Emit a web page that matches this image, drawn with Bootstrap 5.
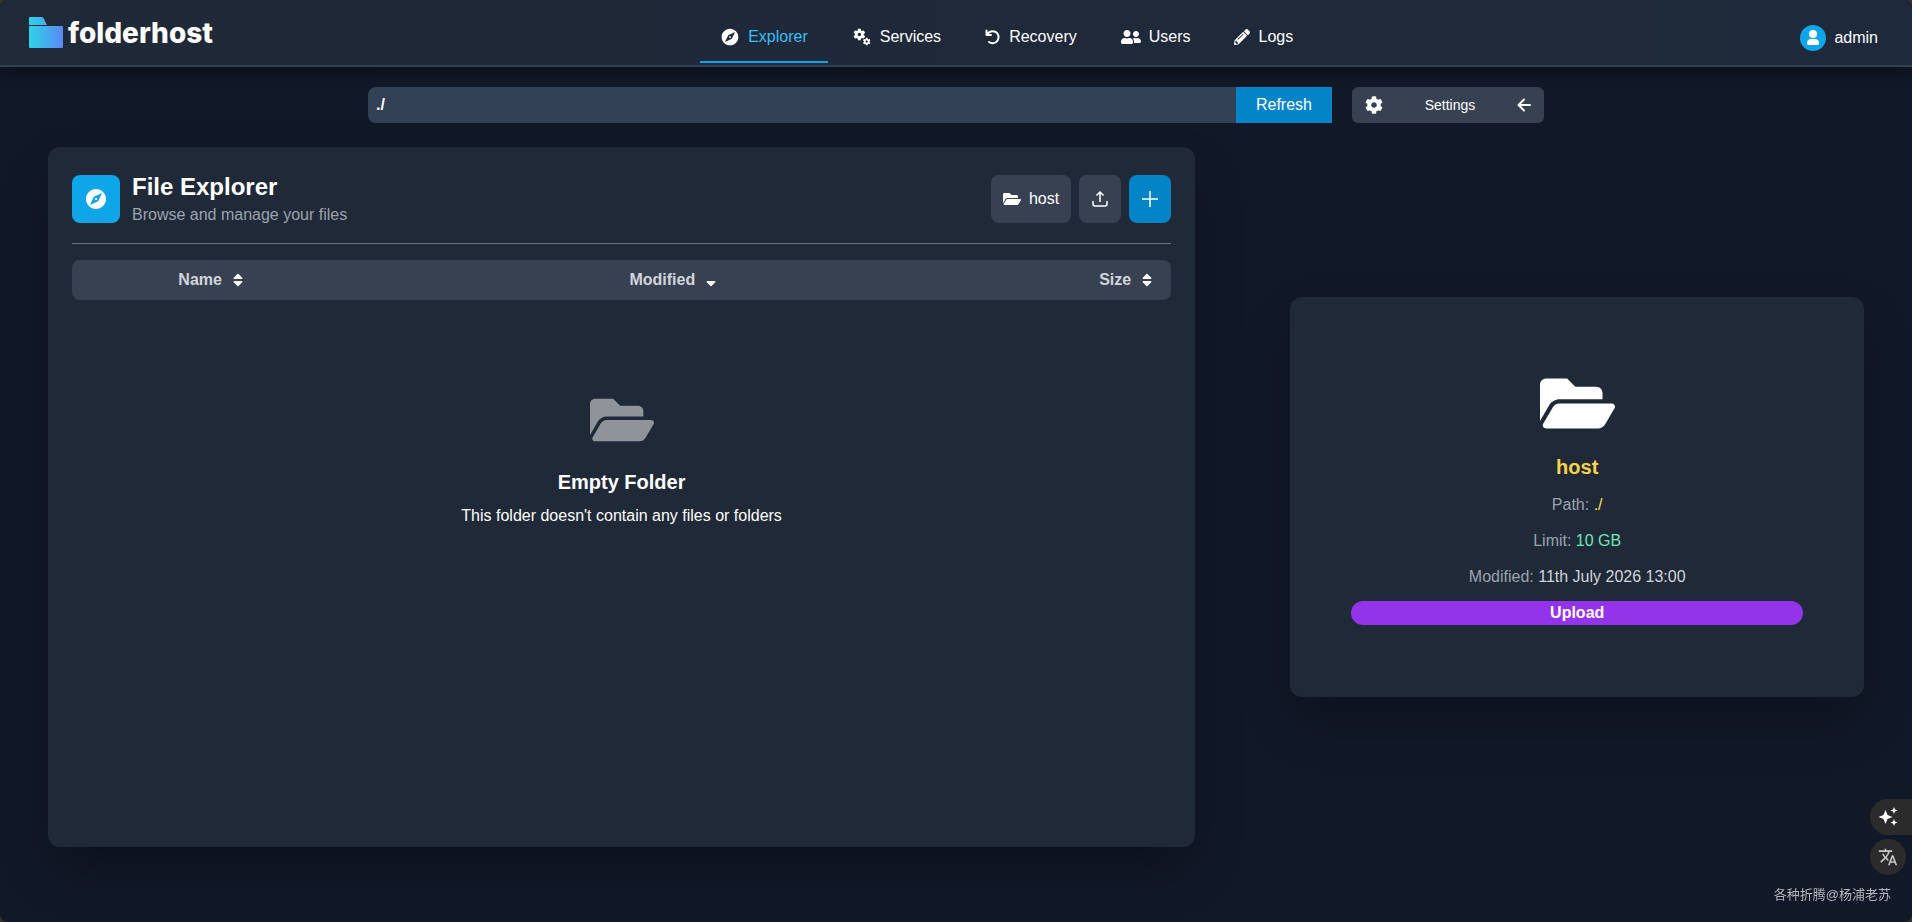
<!DOCTYPE html>
<html lang="en">
<head>
<meta charset="utf-8">
<meta name="viewport" content="width=device-width, initial-scale=1">
<title>folderhost – Explorer</title>
<link href="https://cdn.jsdelivr.net/npm/bootstrap@5.3.0/dist/css/bootstrap.min.css" rel="stylesheet">
<style>
  html { background: #35322f; }
  body {
    background: #111827; color: #fff; min-height: 100vh; border-radius: 8px; overflow-x: hidden;
    font-family: "Liberation Sans", Arial, sans-serif; font-size: 16px; line-height: 24px;
  }
  svg { display: block; flex: none; fill: currentColor; }
  .topbar {
    background: linear-gradient(90deg, #1f2937, #1e293b); border-bottom: 2px solid #334155;
    border-radius: 8px 8px 0 0; padding: 13px 34px 2px 28px; box-shadow: 0 10px 15px -3px rgba(0,0,0,.3);
  }
  .brand { color: #fff; gap: 5px; font: 800 28px/32px Inter, sans-serif; }
  .main-nav .nav-link { color: #fff; padding: 12px 20px; border-bottom: 2px solid transparent; gap: 8px; }
  .main-nav .nav-link.active { color: #38bdf8; border-color: #0ea5e9; }
  .main-nav .nav-link svg { color: #fff; }
  .account { color: #fff; gap: 8px; }
  .avatar { width: 26px; height: 26px; background: #0ea5e9; }
  .pathbar { max-width: 1176px; gap: 20px; margin-top: 20px; }
  .path-input, .path-input:focus {
    background: #334155; color: #fff; border: 0; border-radius: 8px 0 0 8px; height: 36px;
    padding: 0 8px; font-weight: 700; box-shadow: none;
  }
  .blue, .blue:hover { background: #0284c7; color: #fff; }
  .gray, .gray:hover { background: #374151; color: #fff; }
  .refresh { border: 0; border-radius: 0; padding: 0 20px; }
  .settings { width: 192px; height: 36px; padding: 0 13px; border: 0; border-radius: 6px; font-size: 14px; }
  .workspace { padding: 24px 48px; }
  .panel { background: #1f2937; border-radius: 12px; box-shadow: 0 25px 50px -12px rgba(0,0,0,.35); }
  .files { width: 60vw; min-height: 700px; padding: 24px; }
  .files-head { padding-bottom: 16px; border-bottom: 1px solid #6b7280; margin-bottom: 16px; }
  .tile { width: 48px; height: 48px; background: #0ea5e9; border-radius: 8px; }
  .title { font-size: 24px; line-height: 32px; font-weight: 700; }
  .muted { color: #9ca3af; }
  .tool { height: 48px; padding: 0 12px; border: 0; border-radius: 8px; gap: 8px; }
  .listing { width: 100%; table-layout: fixed; border-collapse: separate; border-spacing: 0; background: #374151; border-radius: 8px; }
  .listing th { padding: 8px 16px; text-align: center; }
  .listing th:last-child { text-align: right; }
  .sort { background: none; border: 0; padding: 0; gap: 8px; color: #d1d5db; font-weight: 700; }
  .sort svg { color: #fff; }
  .empty { padding: 88px 0; }
  .faded { opacity: .5; }
  .subtitle { font-size: 20px; line-height: 28px; font-weight: 700; }
  .details { width: 30vw; min-height: 400px; padding: 24px 61px 27px; gap: 12px; }
  .gold { color: #fcd34d; }
  .path-value { color: #fde047; }
  .limit-value { color: #6ee7b7; }
  .date-value { color: #d1d5db; }
  .upload { background: #9333ea; color: #fff; border: 0; border-radius: 12px; font-weight: 700; line-height: 24px; padding: 0; }
  .floating { right: 0; bottom: 47px; gap: 4px; }
  .floating button { background: #2b2b2b; color: #fff; border: 0; height: 36px; padding: 0 8px; }
  .assist { width: 42px; border-radius: 18px 0 0 18px; }
  .translate { width: 36px; border-radius: 18px; margin-right: 6px; }
  .translate svg { opacity: .75; }
  .credit { right: 21px; bottom: 15px; color: #b4b6ba; font: 13px/24px "Liberation Sans", "Noto Sans CJK SC", sans-serif; }
</style>
</head>
<body>
<svg width="0" height="0" class="position-absolute" aria-hidden="true">
  <symbol id="compass" viewBox="0 0 24 24"><path d="M12 10.9c-.61 0-1.1.49-1.1 1.1s.49 1.1 1.1 1.1c.61 0 1.1-.49 1.1-1.1s-.49-1.1-1.1-1.1zM12 2C6.48 2 2 6.48 2 12s4.48 10 10 10 10-4.48 10-10S17.52 2 12 2zm2.19 12.19L6 18l3.81-8.19L18 6l-3.81 8.19z"/></symbol>
  <symbol id="folder-open" viewBox="0 0 576 512"><path d="M572.694 292.093L500.27 416.248A63.997 63.997 0 0 1 444.989 448H45.025c-18.523 0-30.064-20.093-20.731-36.093l72.424-124.155A64 64 0 0 1 152 256h399.964c18.523 0 30.064 20.093 20.73 36.093zM152 224h328v-48c0-26.51-21.49-48-48-48H272l-64-64H48C21.49 64 0 85.49 0 112v278.046l69.077-118.418C86.214 242.25 117.989 224 152 224z"/></symbol>
  <symbol id="sort" viewBox="0 0 320 512"><path d="M41 288h238c21.4 0 32.1 25.9 17 41L177 448c-9.400 9.400-24.600 9.400-33.900 0L24 329c-15.100-15.100-4.400-41 17-41zm255-105L177 64c-9.400-9.400-24.600-9.400-33.900 0L24 183c-15.100 15.100-4.400 41 17 41h238c21.400 0 32.100-25.900 17-41z"/></symbol>
  <symbol id="sort-down" viewBox="0 0 320 512"><path d="M41 288h238c21.400 0 32.100 25.900 17 41L177 448c-9.400 9.400-24.600 9.400-33.900 0L24 329c-15.100-15.100-4.400-41 17-41z"/></symbol>
</svg>

<header class="topbar d-flex align-items-center justify-content-between">
  <a href="#" class="brand d-flex align-items-center align-self-start mt-1 text-decoration-none">
    <svg width="35" height="32" viewBox="0 0 35 32">
      <defs><linearGradient id="lg" gradientUnits="userSpaceOnUse" x1="1" y1="0" x2="35" y2="0"><stop offset="0" stop-color="#2dd4e6"/><stop offset="1" stop-color="#5b87f5"/></linearGradient></defs>
      <path fill="url(#lg)" d="M2 0h12q1 0 2 2l3 6H1V1q0-1 1-1zM1 9h33q1 0 1 1v20q0 1-1 1H2q-1 0-1-1z"/>
    </svg>
    <span>folderhost</span>
  </a>
  <nav class="main-nav nav gap-1" aria-label="Main">
    <a class="nav-link active d-flex align-items-center" href="#"><svg width="20" height="20"><use href="#compass"/></svg>Explorer</a>
    <a class="nav-link d-flex align-items-center" href="#"><svg width="20" height="20" viewBox="0 0 24 24"><path d="M14.170,13.710l1.400-2.420c0.090-0.150,0.050-0.340-0.080-0.450l-1.480-1.160c0.030-0.220,0.050-0.450,0.050-0.680s-0.020-0.460-0.050-0.690l1.480-1.160c0.130-0.110,0.170-0.300,0.080-0.450l-1.400-2.420c-0.090-0.150-0.270-0.210-0.430-0.150L12,4.830c-0.360-0.280-0.750-0.510-1.180-0.690l-0.260-1.850C10.530,2.130,10.380,2,10.210,2h-2.800C7.240,2,7.090,2.130,7.060,2.300L6.800,4.150C6.380,4.330,5.980,4.560,5.620,4.840l-1.740-0.700c-0.160-0.060-0.340,0-0.430,0.150l-1.400,2.420C1.960,6.860,2,7.050,2.130,7.160l1.480,1.160C3.580,8.540,3.560,8.770,3.560,9s0.020,0.460,0.050,0.690l-1.480,1.160C2,10.960,1.960,11.150,2.050,11.300l1.400,2.420c0.090,0.150,0.270,0.210,0.430,0.150l1.740-0.700c0.360,0.280,0.750,0.510,1.180,0.690l0.260,1.850C7.090,15.870,7.240,16,7.410,16h2.800c0.170,0,0.320-0.130,0.350-0.300l0.260-1.850c0.420-0.180,0.820-0.410,1.180-0.690l1.740,0.700C13.900,13.920,14.080,13.860,14.170,13.710zM8.810,11c-1.100,0-2-0.900-2-2c0-1.100,0.900-2,2-2s2,0.900,2,2C10.810,10.100,9.910,11,8.810,11zM21.920,18.670l-0.960-0.740c0.020-0.140,0.040-0.290,0.040-0.440c0-0.150-0.010-0.300-0.040-0.440l0.950-0.740c0.080-0.070,0.110-0.190,0.050-0.290l-0.900-1.550c-0.050-0.100-0.170-0.130-0.280-0.100l-1.110,0.450c-0.230-0.180-0.480-0.330-0.760-0.440l-0.170-1.180C18.730,13.080,18.630,13,18.530,13h-1.790c-0.110,0-0.210,0.080-0.220,0.190l-0.170,1.180c-0.270,0.120-0.530,0.260-0.760,0.440l-1.110-0.450c-0.100-0.040-0.220,0-0.280,0.100l-0.900,1.550c-0.050,0.100-0.040,0.220,0.050,0.290l0.950,0.740c-0.020,0.140-0.030,0.290-0.030,0.440c0,0.150,0.010,0.300,0.030,0.440l-0.950,0.740c-0.080,0.070-0.110,0.190-0.050,0.290l0.900,1.550c0.050,0.100,0.170,0.130,0.280,0.100l1.110-0.450c0.230,0.180,0.480,0.330,0.760,0.440l0.170,1.180c0.020,0.110,0.110,0.190,0.220,0.190h1.790c0.110,0,0.210-0.080,0.220-0.190l0.170-1.180c0.270-0.120,0.530-0.260,0.750-0.440l1.120,0.450c0.100,0.040,0.220,0,0.280-0.100l0.900-1.550C22.030,18.860,22,18.740,21.920,18.670zM17.630,18.830c-0.740,0-1.350-0.600-1.350-1.350s0.600-1.350,1.350-1.350s1.350,0.600,1.350,1.350S18.370,18.830,17.630,18.830z"/></svg>Services</a>
    <a class="nav-link d-flex align-items-center" href="#"><svg width="16" height="16" viewBox="0 0 16 16"><path d="M1.500 1.500v4.500h4.500M2.200 5.600A6 6 0 1 1 4 13" fill="none" stroke="currentColor" stroke-width="2" stroke-linecap="round" stroke-linejoin="round"/></svg>Recovery</a>
    <a class="nav-link d-flex align-items-center" href="#"><svg width="20" height="20" viewBox="0 0 640 512"><path d="M192 256c61.900 0 112-50.100 112-112S253.900 32 192 32 80 82.100 80 144s50.100 112 112 112zm76.800 32h-8.300c-20.800 10-43.900 16-68.500 16s-47.600-6-68.500-16h-8.300C51.600 288 0 339.600 0 403.200V432c0 26.500 21.500 48 48 48h288c26.500 0 48-21.500 48-48v-28.800c0-63.600-51.600-115.200-115.200-115.200zM480 256c53 0 96-43 96-96s-43-96-96-96-96 43-96 96 43 96 96 96zm48 32h-3.800c-13.900 4.800-28.600 8-44.200 8s-30.300-3.200-44.200-8H432c-20.400 0-39.200 5.900-55.700 15.400 24.400 26.300 39.700 61.200 39.700 99.800v38.400c0 2.200-.5 4.300-.6 6.400H592c26.500 0 48-21.500 48-48 0-61.900-50.100-112-112-112z"/></svg>Users</a>
    <a class="nav-link d-flex align-items-center" href="#"><svg width="16" height="16" viewBox="0 0 512 512"><path d="M497.900 142.100l-46.100 46.100c-4.700 4.700-12.300 4.700-17 0l-111-111c-4.700-4.700-4.700-12.300 0-17l46.100-46.100c18.700-18.700 49.100-18.700 67.900 0l60.100 60.100c18.800 18.700 18.800 49.100 0 67.900zM284.200 99.800L21.600 362.400.4 483.900c-2.900 16.400 11.400 30.600 27.800 27.800l121.500-21.300 262.600-262.600c4.700-4.700 4.700-12.300 0-17l-111-111c-4.800-4.700-12.400-4.700-17.100 0zM124.100 339.900c-5.500-5.500-5.500-14.300 0-19.800l154-154c5.500-5.500 14.300-5.500 19.800 0s5.500 14.300 0 19.800l-154 154c-5.500 5.500-14.300 5.500-19.800 0zM88 424h48v36.300l-64.500 11.300-31.100-31.100L51.700 376H88v48z"/></svg>Logs</a>
  </nav>
  <a href="#" class="account d-flex align-items-center text-decoration-none">
    <span class="avatar rounded-circle d-flex align-items-center justify-content-center"><svg width="14" height="16" viewBox="0 0 14 16"><circle cx="7" cy="4" r="4"/><path d="M1 13c0-3 2-4 4-4h4c2 0 4 1 4 4 0 1.500-.5 2-1.500 2h-9C1.500 15 1 14.500 1 13z"/></svg></span>
    admin
  </a>
</header>

<main>
  <div class="pathbar d-flex mx-auto">
    <form class="d-flex flex-grow-1" onsubmit="return false">
      <input class="form-control path-input" type="text" value="./" aria-label="Path">
      <button class="btn blue refresh" type="submit">Refresh</button>
    </form>
    <button class="btn gray settings d-flex align-items-center justify-content-between" type="button">
      <svg width="18" height="18" viewBox="0 0 512 512"><path d="M487.400 315.700l-42.600-24.600c4.300-23.200 4.300-47 0-70.200l42.600-24.600c4.900-2.800 7.100-8.600 5.500-14-11.100-35.600-30-67.800-54.700-94.600-3.800-4.100-10-5.100-14.800-2.300L380.800 110c-17.900-15.400-38.500-27.300-60.800-35.100V25.800c0-5.600-3.900-10.500-9.400-11.700-36.700-8.200-74.300-7.800-109.200 0-5.500 1.200-9.400 6.100-9.400 11.700V75c-22.200 7.900-42.800 19.800-60.800 35.100L88.700 85.500c-4.900-2.800-11-1.900-14.800 2.300-24.700 26.700-43.600 58.900-54.700 94.600-1.700 5.400.6 11.200 5.500 14L67.300 221c-4.300 23.200-4.300 47 0 70.200l-42.600 24.600c-4.900 2.800-7.100 8.600-5.500 14 11.100 35.600 30 67.800 54.700 94.600 3.800 4.100 10 5.100 14.800 2.300l42.600-24.600c17.900 15.400 38.500 27.300 60.800 35.100v49.200c0 5.600 3.900 10.500 9.400 11.700 36.700 8.200 74.300 7.800 109.200 0 5.500-1.200 9.400-6.100 9.400-11.700v-49.200c22.200-7.900 42.800-19.800 60.800-35.100l42.600 24.600c4.900 2.800 11 1.900 14.800-2.300 24.700-26.700 43.600-58.900 54.700-94.600 1.500-5.500-.7-11.300-5.600-14.100zM256 336c-44.100 0-80-35.900-80-80s35.900-80 80-80 80 35.900 80 80-35.900 80-80 80z"/></svg>
      <span>Settings</span>
      <svg width="14" height="14" viewBox="0 0 14 14"><path d="M13 7H2M7 1.500L1.500 7 7 12.500" fill="none" stroke="currentColor" stroke-width="2" stroke-linecap="round" stroke-linejoin="round"/></svg>
    </button>
  </div>

  <div class="workspace d-flex align-items-center justify-content-between">
    <section class="panel files">
      <div class="files-head d-flex align-items-center justify-content-between">
        <div class="d-flex align-items-center">
          <span class="tile d-flex align-items-center justify-content-center"><svg width="24" height="24"><use href="#compass"/></svg></span>
          <div class="ms-2 ps-1">
            <h1 class="title m-0">File Explorer</h1>
            <p class="muted m-0">Browse and manage your files</p>
          </div>
        </div>
        <div class="d-flex gap-2">
          <button class="btn gray tool d-flex align-items-center" type="button"><svg width="18" height="18"><use href="#folder-open"/></svg>host</button>
          <button class="btn gray tool d-flex align-items-center" type="button" aria-label="Upload"><svg width="18" height="18" viewBox="0 0 18 18"><path d="M2 11v3q0 2 2 2h10q2 0 2-2v-3M9 12V2M5.500 5.500L9 2l3.500 3.500" fill="none" stroke="currentColor" stroke-width="1.500"/></svg></button>
          <button class="btn blue tool d-flex align-items-center" type="button" aria-label="New"><svg width="18" height="18" viewBox="0 0 18 18"><path d="M9 1v16M1 9h16" fill="none" stroke="currentColor" stroke-width="1.500"/></svg></button>
        </div>
      </div>
      <table class="listing">
        <colgroup><col style="width:25.5%"><col style="width:58.6%"><col></colgroup>
        <thead><tr>
          <th scope="col"><button class="sort d-inline-flex align-items-center" type="button">Name <svg width="16" height="16"><use href="#sort"/></svg></button></th>
          <th scope="col"><button class="sort d-inline-flex align-items-center" type="button">Modified <svg width="16" height="16"><use href="#sort-down"/></svg></button></th>
          <th scope="col"><button class="sort d-inline-flex align-items-center" type="button">Size <svg width="16" height="16"><use href="#sort"/></svg></button></th>
        </tr></thead>
      </table>
      <div class="empty d-flex flex-column align-items-center text-center">
        <svg class="faded mb-3" width="64" height="64"><use href="#folder-open"/></svg>
        <h2 class="subtitle mb-2">Empty Folder</h2>
        <p class="m-0">This folder doesn't contain any files or folders</p>
      </div>
    </section>

    <aside class="panel details d-flex flex-column justify-content-center text-center">
      <svg class="mx-auto" width="75" height="75"><use href="#folder-open"/></svg>
      <h2 class="subtitle gold m-0">host</h2>
      <p class="muted m-0">Path: <span class="path-value">./</span></p>
      <p class="muted m-0">Limit: <span class="limit-value">10 GB</span></p>
      <p class="muted m-0">Modified: <span class="date-value">11th July 2026 13:00</span></p>
      <button class="upload" type="button">Upload</button>
    </aside>
  </div>
</main>

<div class="floating position-fixed d-flex flex-column align-items-end">
  <button class="assist" type="button" aria-label="Assistant"><svg width="20" height="20" viewBox="0 0 20 20"><path d="M7.500 3l2 5 5 2-5 2-2 5-2-5-5-2 5-2zM16 0l1 2.500 2.500 1-2.500 1-1 2.500-1-2.500-2.500-1 2.500-1zM16 12l1 2.500 2.500 1-2.500 1-1 2.500-1-2.500-2.500-1 2.500-1z"/></svg></button>
  <button class="translate" type="button" aria-label="Translate"><svg width="20" height="20" viewBox="0 0 24 24"><path d="M12.870 15.070l-2.540-2.510.03-.03c1.740-1.940 2.980-4.170 3.710-6.530H17V4h-7V2H8v2H1v1.990h11.170C11.500 7.920 10.440 9.750 9 11.350 8.070 10.320 7.300 9.190 6.690 8h-2c.73 1.630 1.730 3.170 2.980 4.560l-5.090 5.020L4 19l5-5 3.110 3.110.76-2.040zM18.500 10h-2L12 22h2l1.120-3h4.750L21 22h2l-4.500-12zm-2.620 7l1.620-4.330L19.120 17h-3.240z"/></svg></button>
</div>
<div class="credit position-fixed">各种折腾@杨浦老苏</div>
<script src="https://cdn.jsdelivr.net/npm/bootstrap@5.3.0/dist/js/bootstrap.bundle.min.js"></script>
</body>
</html>
